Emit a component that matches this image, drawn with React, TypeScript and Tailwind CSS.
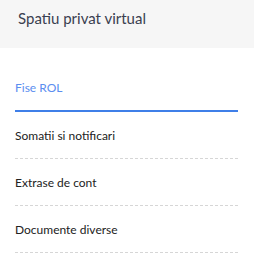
export default function App() {
  const items = ["Somatii si notificari", "Extrase de cont", "Documente diverse"];
  return (
    <div className="w-[254px] h-[257px] bg-white font-['Lato',sans-serif]">
      <div className="h-[48px] bg-[#f6f6f6] pl-[18px] pt-[8px]">
        <h1 className="text-[15px] leading-[20px] text-[#3a4050]">Spatiu privat virtual</h1>
      </div>
      <nav className="pl-[15px] pr-[16px] pt-[32px]">
        <div className="h-[32px] border-b-2 border-[#3f7fe8] text-[12px] leading-[16px] text-[#5b8ef0]">
          Fise ROL
        </div>
        {items.map((item) => (
          <div
            key={item}
            className="h-[47px] pt-[16px] border-b border-dashed border-[#d6d6d6] text-[12px] leading-[16px] text-[#222222]"
          >
            {item}
          </div>
        ))}
      </nav>
    </div>
  );
}
